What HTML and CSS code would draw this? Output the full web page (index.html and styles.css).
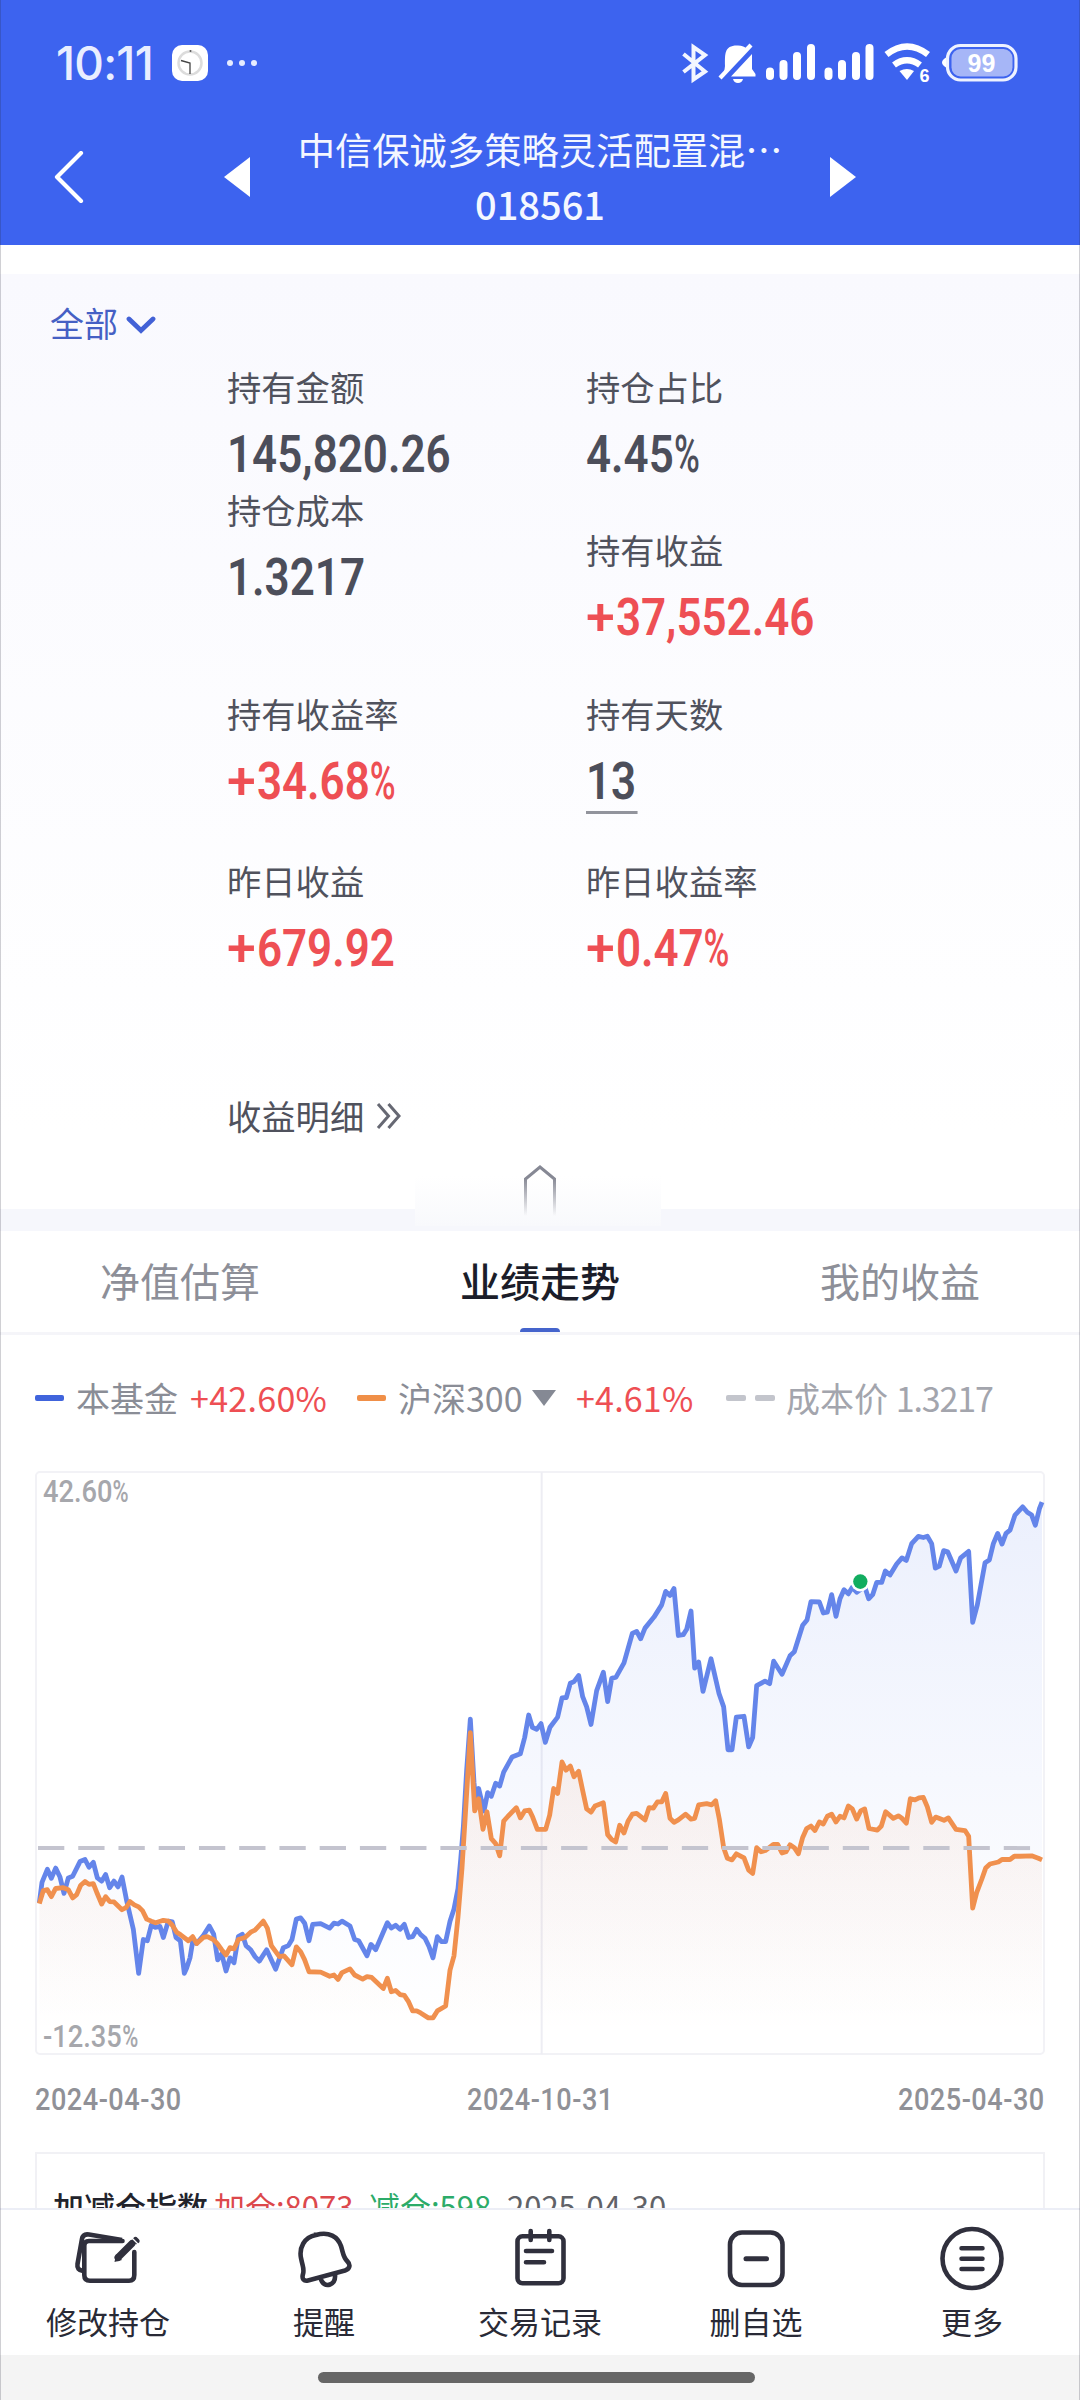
FILE: index.html
```
<!DOCTYPE html>
<html lang="zh-CN">
<head>
<meta charset="utf-8">
<title>基金详情</title>
<link rel="stylesheet" href="styles.css">
</head>
<body>
<div class="page">
  <header class="header">
    <div class="status">
      <span class="clock">10:11</span>
      <svg class="app-icon" viewBox="0 0 36 36"><rect width="36" height="36" rx="10" fill="#fff"/><circle cx="18" cy="18" r="11.5" fill="none" stroke="#dcdcdc" stroke-width="2.5"/><path d="M9 15.5l9 2.5v11" fill="none" stroke="#444" stroke-width="1.3"/><circle cx="18.5" cy="6" r="1" fill="#555"/></svg>
      <svg class="dots" viewBox="0 0 32 8"><g fill="#e6ecff"><circle cx="4" cy="4" r="3"/><circle cx="16" cy="4" r="3"/><circle cx="28" cy="4" r="3"/></g></svg>
      <svg class="indicators" viewBox="680 42 340 42">
        <path d="M683.500 54L705 71.500L693.500 79.500V47L705 55L683.500 72" fill="none" stroke="#f3f6ff" stroke-width="4"/>
        <path d="M725 66c0-12-1-21 13-20.500c4 .1 7 1.500 9 3.500L724 73zM731 76.500L752 54v15l3.500 5v2.500zM733 79h10q-1 4-5 4t-5-4z" fill="#fff"/>
        <path d="M720 78L751 45" stroke="#fff" stroke-width="4.200"/>
        <g stroke="#fff" stroke-width="8" stroke-linecap="round"><path d="M770 71.500V76M783.500 64V76M797 56V76M811 48V76M828.500 71.500V76M842 64V76M856 56V76M869.500 48V76"/></g>
        <g fill="none" stroke="#fff" stroke-width="6.500"><path d="M886.500 54.500Q907 38.500 928 54.500"/><path d="M894 65Q907 55.500 920 65"/></g>
        <path d="M899.500 71Q907 67 914 71L907 80z" fill="#fff"/>
        <text x="924.500" y="81.500" class="wifi-gen">6</text>
        <rect x="947.500" y="45.500" width="68.500" height="34.500" rx="13" fill="none" stroke="#eef2ff" stroke-width="3.200"/>
        <path d="M946 57.500Q942 60 942 62.500T946 67.500z" fill="#fff"/>
        <rect x="951.500" y="49" width="61" height="27.500" rx="9" fill="#a6b6f7"/>
        <text x="981.500" y="71.500" class="battery-level">99</text>
      </svg>
    </div>
    <nav class="nav">
      <svg class="back" viewBox="0 0 30 52"><path d="M27 2L3 26L27 50" fill="none" stroke="#fff" stroke-width="4.200" stroke-linecap="round" stroke-linejoin="round"/></svg>
      <svg class="tri" viewBox="0 0 26 40"><path d="M26 0V40L0 20z" fill="#fff"/></svg>
      <div class="fund"><div class="fund-name">中信保诚多策略灵活配置混<span class="ell">⋯</span></div><div class="fund-code">018561</div></div>
      <svg class="tri" viewBox="0 0 26 40"><path d="M0 0V40L26 20z" fill="#fff"/></svg>
    </nav>
  </header>

  <section class="holding">
    <div class="filter"><span>全部</span><svg viewBox="0 0 30 20"><path d="M3 4L15 15.500L27 4" fill="none" stroke="#4261d6" stroke-width="4.800" stroke-linecap="round"/></svg></div>
    <div class="metrics">
      <div class="cell stack">
        <div class="metric"><div class="label">持有金额</div><div class="value">145,820.26</div></div>
        <div class="metric"><div class="label">持仓成本</div><div class="value">1.3217</div></div>
      </div>
      <div class="cell spread">
        <div class="metric"><div class="label">持仓占比</div><div class="value">4.45<i>%</i></div></div>
        <div class="metric"><div class="label">持有收益</div><div class="value up"><b class="sign">+</b>37,552.46</div></div>
      </div>
      <div class="metric"><div class="label">持有收益率</div><div class="value up"><b class="sign">+</b>34.68<i>%</i></div></div>
      <div class="metric"><div class="label">持有天数</div><div class="value days">13</div></div>
      <div class="metric"><div class="label">昨日收益</div><div class="value up"><b class="sign">+</b>679.92</div></div>
      <div class="metric"><div class="label">昨日收益率</div><div class="value up"><b class="sign">+</b>0.47<i>%</i></div></div>
    </div>
    <div class="detail"><span class="label">收益明细</span><svg viewBox="0 0 26 28"><path d="M2 2L12.500 14L2 26M12.500 2L23 14L12.500 26" fill="none" stroke="#666873" stroke-width="3"/></svg></div>
    <div class="collapse">
      <svg viewBox="0 0 36 54"><defs><linearGradient id="fade" gradientUnits="userSpaceOnUse" x1="0" y1="14" x2="0" y2="52"><stop offset="0" stop-color="#868894"/><stop offset="1" stop-color="#868894" stop-opacity="0"/></linearGradient></defs><path d="M3.500 52V15L18 3L32.500 15V52" fill="none" stroke="url(#fade)" stroke-width="3"/></svg>
    </div>
  </section>

  <div class="tabs"><div class="tab">净值估算</div><div class="tab active">业绩走势</div><div class="tab">我的收益</div></div>

  <section class="trend">
    <div class="legend">
      <b class="dash blue"></b><span class="l1">本基金</span><span class="up l2">+42.60%</span>
      <b class="dash orange"></b><span class="l3">沪深300</span><svg class="drop" viewBox="0 0 24 16"><path d="M0 0H24L12 16z" fill="#858994"/></svg><span class="up l4">+4.61%</span>
      <b class="dash gray"></b><b class="dash gray"></b><span class="cost">成本价 <span class="price">1.3217</span></span>
    </div>
    <div class="chart">
      <svg class="plot" viewBox="105 27 3030 1431" preserveAspectRatio="none">
        <defs>
          <linearGradient id="gb" gradientUnits="userSpaceOnUse" x1="0" y1="100" x2="0" y2="1380"><stop offset="0" stop-color="#5b7fec" stop-opacity=".12"/><stop offset=".65" stop-color="#5b7fec" stop-opacity=".04"/><stop offset="1" stop-color="#5b7fec" stop-opacity="0"/></linearGradient>
          <linearGradient id="go" gradientUnits="userSpaceOnUse" x1="0" y1="700" x2="0" y2="1400"><stop offset="0" stop-color="#f0884a" stop-opacity=".10"/><stop offset="1" stop-color="#f0884a" stop-opacity="0"/></linearGradient>
        </defs>
        <path class="grid" d="M1625 30V1456"/>
        <path id="blueArea" fill="url(#gb)"/>
        <path id="orangeArea" fill="url(#go)"/>
        <polyline id="blueLine" class="line fund-line"/>
        <polyline id="orangeLine" class="line index-line"/>
        <path class="cost-line" d="M114 951H3096"/>
        <ellipse cx="2581" cy="298" rx="29" ry="24" fill="#fff"/>
        <ellipse cx="2581" cy="298" rx="21.500" ry="18" fill="#12ad60"/>
      </svg>
      <span class="axis top">42.60<i>%</i></span>
      <span class="axis bottom">-12.35<i>%</i></span>
    </div>
    <div class="dates"><span>2024-04-30</span><span>2024-10-31</span><span>2025-04-30</span></div>
    <div class="index-card"><span class="name">加减仓指数</span><span class="add">加仓:8073</span><span class="cut">减仓:598</span><span class="day">2025-04-30</span></div>
  </section>

  <footer class="toolbar">
    <div class="tool"><svg viewBox="74 2228 68 60"><path d="M122.500 2241H89Q84.300 2241 84.300 2246V2275Q84.300 2280.700 90 2280.700H129Q134.300 2280.700 134.300 2275V2252" stroke-linecap="round"/><path d="M122 2240L89 2234.500Q83 2233.500 82 2239L77.500 2264Q76.500 2270 83 2271"/><path d="M118 2257.500L132 2243.500" stroke-width="7" stroke-linecap="round"/><path d="M114.500 2262L116 2254L122 2260z" fill="#30303d" stroke="none"/><path d="M135.500 2240L136.500 2241" stroke-width="6" stroke-linecap="round"/><path d="M131 2237L139.500 2245.500" stroke="#fff" stroke-width="1.200"/></svg><span>修改持仓</span></div>
    <div class="tool"><svg viewBox="290 2228 68 60"><path d="M316 2235C304 2237 299 2248 301 2258C303 2268 304.500 2269 303 2274C301.500 2279 304 2281.500 308 2280.500L345 2270.500C349.500 2269 351 2265 347.500 2261.500C343 2257 343.500 2254 341 2246C338 2237 329 2231 316 2235zM316 2235V2232.500M320.500 2278C322 2284 326 2286 330 2284.500S335.500 2279 335 2274"/></svg><span>提醒</span></div>
    <div class="tool"><svg viewBox="506 2228 68 60"><rect x="517.500" y="2236.300" width="46" height="47" rx="5"/><path d="M530.700 2231V2240M549.300 2231V2240M526 2251H552M526 2262.300H544" stroke-linecap="round"/></svg><span>交易记录</span></div>
    <div class="tool"><svg viewBox="722 2228 68 60"><rect x="730" y="2232.500" width="52.500" height="52.500" rx="12"/><path d="M746 2258.700H766.500" stroke-width="5" stroke-linecap="round"/></svg><span>删自选</span></div>
    <div class="tool"><svg viewBox="938 2228 68 60"><circle cx="972" cy="2258.500" r="29.500"/><path d="M961.500 2248.300H982.500M961.500 2258.700H982.500M961.500 2269H982.500" stroke-width="4.500" stroke-linecap="round"/></svg><span>更多</span></div>
  </footer>
  <div class="home"><div class="pill"></div></div>
</div>
<script src="chart.js"></script>
</body>
</html>
```
FILE: chart.js
```
// Series are plotted in the viewBox units of the .plot svg.
var fund = "118,1085 126,1035 142,1003 154,1025 167,1000 180,1022 192,1062 205,1024 218,1020 240,984 255,979 267,998 280,986 292,1024 305,1032 317,1016 329,1048 342,1032 354,1046 366,1022 380,1080 400,1150 416,1258 430,1175 442,1178 454,1140 466,1145 480,1143 490,1170 505,1130 517,1132 528,1170 541,1178 553,1258 560,1245 570,1220 578,1180 590,1185 610,1165 628,1142 641,1162 653,1225 665,1210 678,1252 690,1220 702,1232 715,1168 727,1162 738,1190 752,1200 765,1217 778,1228 800,1200 827,1248 850,1195 865,1190 876,1175 889,1125 902,1122 914,1135 927,1178 938,1138 962,1136 989,1147 1002,1135 1014,1137 1026,1130 1050,1142 1064,1175 1076,1178 1101,1215 1113,1187 1127,1200 1162,1134 1174,1147 1187,1140 1200,1150 1213,1138 1226,1170 1238,1168 1250,1150 1262,1163 1275,1172 1287,1192 1299,1220 1312,1168 1324,1180 1337,1180 1350,1130 1362,1100 1374,1050 1382,980 1390,900 1400,760 1411,635 1422,790 1428,850 1436,805 1452,860 1463,815 1474,824 1487,792 1499,799 1511,765 1536,728 1561,720 1574,680 1586,625 1597,655 1610,660 1623,646 1636,692 1650,655 1673,630 1686,583 1699,582 1711,547 1722,543 1736,528 1748,580 1760,605 1773,648 1790,565 1810,520 1823,592 1835,535 1848,532 1872,497 1897,425 1910,420 1922,438 1935,412 1962,385 1985,355 1997,322 2010,332 2022,315 2035,430 2050,428 2060,415 2073,370 2084,510 2096,495 2109,567 2133,487 2157,572 2171,605 2184,710 2196,710 2209,630 2232,628 2246,703 2258,680 2270,553 2295,542 2309,548 2321,493 2346,525 2370,480 2383,470 2408,405 2421,392 2433,347 2458,348 2470,375 2482,373 2495,330 2508,383 2520,340 2532,318 2545,328 2557,312 2570,324 2594,310 2606,340 2618,330 2630,300 2645,300 2656,272 2670,282 2690,255 2706,240 2719,246 2735,205 2755,187 2770,190 2782,187 2795,205 2806,265 2818,260 2831,222 2843,225 2868,272 2882,240 2906,224 2918,398 2932,355 2955,252 2968,245 2980,205 2993,180 3006,206 3018,180 3030,172 3045,135 3068,115 3082,128 3095,135 3106,160 3118,120 3126,103";
var index = "118,1087 130,1055 142,1053 154,1070 167,1050 190,1048 205,1053 218,1073 230,1065 242,1042 255,1033 267,1040 280,1038 292,1063 305,1088 317,1070 329,1082 342,1083 366,1102 378,1097 390,1082 403,1090 416,1095 428,1105 440,1125 454,1130 467,1134 490,1128 505,1130 517,1140 530,1157 541,1163 565,1178 578,1168 590,1185 610,1170 622,1168 640,1175 652,1185 665,1200 678,1213 690,1195 702,1198 715,1175 735,1170 752,1157 765,1152 790,1130 802,1147 814,1190 838,1217 852,1215 876,1237 889,1193 902,1205 914,1225 927,1254 962,1255 989,1265 1002,1262 1014,1273 1026,1256 1050,1247 1064,1262 1088,1272 1101,1266 1115,1268 1150,1295 1162,1270 1174,1303 1187,1300 1200,1310 1213,1312 1226,1328 1238,1350 1250,1350 1262,1355 1285,1367 1299,1367 1312,1350 1337,1338 1350,1250 1362,1215 1374,1120 1386,1000 1396,870 1411,668 1424,860 1436,830 1449,905 1461,862 1474,928 1487,940 1499,970 1511,885 1524,873 1549,852 1561,877 1574,860 1588,858 1598,875 1612,905 1637,905 1649,870 1661,805 1673,817 1686,740 1698,760 1711,750 1722,776 1736,763 1748,810 1760,855 1773,863 1785,848 1810,840 1823,918 1835,930 1847,936 1859,895 1872,914 1884,885 1897,868 1910,866 1935,882 1947,852 1960,853 1972,838 1985,838 1997,817 2010,878 2022,888 2035,882 2057,868 2073,880 2084,878 2096,845 2120,842 2135,845 2147,835 2158,880 2171,950 2182,976 2196,980 2209,965 2232,975 2246,1005 2258,1013 2270,950 2283,960 2296,957 2320,942 2333,942 2346,963 2358,960 2370,943 2383,950 2395,965 2408,925 2420,903 2433,897 2445,908 2458,887 2470,892 2482,873 2495,868 2508,887 2520,873 2532,877 2545,848 2557,855 2570,880 2582,860 2594,855 2607,903 2632,907 2644,897 2657,862 2680,878 2695,872 2706,878 2719,890 2731,830 2745,833 2757,828 2770,827 2782,850 2795,888 2807,875 2832,883 2845,877 2868,905 2895,908 2906,922 2918,1098 2930,1060 2945,1028 2957,1000 2970,990 2995,985 3006,979 3030,979 3043,971 3060,971 3095,970 3115,976 3126,980";

function draw(name, points) {
  document.getElementById(name + "Line").setAttribute("points", points);
  document.getElementById(name + "Area").setAttribute("d", "M118,1400L" + points + "L3126,1400Z");
}
draw("blue", fund);
draw("orange", index);
```
FILE: styles.css
```
* { box-sizing: border-box; }
body { margin: 0; background: #fff; font-family: "Noto Sans CJK SC", "Noto Sans", sans-serif; }
svg { display: block; flex: none; }
.page { position: relative; width: 1080px; height: 2400px; overflow: hidden; display: flex; flex-direction: column; background: #fff; }
.page::after { content: ""; position: absolute; inset: 0; border: solid rgba(40, 40, 60, .22); border-width: 0 1px; pointer-events: none; }

.header { height: 245px; background: #3d63ef; color: #f4f7ff; flex: none; }
.status { height: 107px; padding: 38px 60px 0 56px; display: flex; align-items: flex-start; }
.clock { width: 116px; font: 500 46px/51px Inter, sans-serif; letter-spacing: -.8px; color: #e9eeff; }
.app-icon { width: 36px; height: 36px; margin-top: 7px; }
.dots { width: 32px; height: 8px; margin: 21px 0 0 18px; }
.indicators { width: 340px; height: 42px; margin: 4px 0 0 auto; overflow: visible; }
.wifi-gen { font: 700 18px "Liberation Sans", sans-serif; fill: #fff; text-anchor: middle; }
.battery-level { font: 700 25px "Liberation Sans", sans-serif; fill: #fff; text-anchor: middle; }
.nav { height: 138px; padding-left: 54px; display: flex; align-items: flex-start; }
.back { width: 30px; height: 52px; margin: 44px 140px 0 0; }
.tri { width: 26px; height: 40px; margin-top: 50px; }
.fund { width: 580px; text-align: center; padding-top: 16px; }
.fund-name { font-size: 37.300px; line-height: 52px; white-space: nowrap; }
.ell { display: inline-block; width: 37px; }
.fund-code { font-size: 38px; line-height: 57px; font-weight: 500; }

.holding { height: 957px; margin-top: 29px; flex: none; background: linear-gradient(#f9f9fe, #fff 860px, #fff); display: flex; flex-direction: column; }
.filter { height: 93px; padding: 24px 0 0 50px; display: flex; align-items: flex-start; font-size: 34px; line-height: 50px; color: #4560c4; }
.filter svg { width: 30px; height: 20px; margin: 17px 0 0 8px; }
.metrics { margin-left: 227px; display: grid; grid-template-columns: 359px 400px; grid-template-rows: 327px 167px 168px; flex: none; }
.stack { display: flex; flex-direction: column; gap: 7px; }
.spread { display: flex; flex-direction: column; gap: 47px; }
.metric { height: 116px; }
.metric .label { margin-top: -1px; }
.label { font-size: 34.300px; line-height: 40px; color: #50525d; }
.value { margin-top: 18px; width: max-content; font: 600 52px/62px Roboto, sans-serif; color: #4c4e5a; transform: scaleX(.845); transform-origin: left; white-space: nowrap; }
.value i, .axis i { display: inline-block; width: .57em; font-style: normal; font-weight: 500; transform: scaleX(.8); transform-origin: left; }
.sign { display: inline-block; width: .68em; font-weight: 500; transform: scaleX(1.180); transform-origin: left; }
.value.up, .legend .up { color: #ee4f54; }
.days { position: relative; }
.days::after { content: ""; position: absolute; left: 0; bottom: -1px; width: 61px; height: 3px; background: #92949c; }
.detail { margin: 66px 0 0 227px; height: 50px; display: flex; align-items: flex-start; }
.detail svg { width: 26px; height: 28px; margin: 7px 0 0 12px; }
.collapse { height: 67px; flex: none; margin-top: auto; position: relative; background: linear-gradient(transparent 45px, #f6f7fc 45px); display: flex; justify-content: center; }
.collapse::before { content: ""; position: absolute; left: 415px; top: 12px; width: 246px; height: 50px; background: linear-gradient(#fff, #f8f9fc); }
.collapse svg { position: relative; width: 36px; height: 54px; }

.tabs { height: 104px; flex: none; display: grid; grid-template-columns: repeat(3, 1fr); border-bottom: 3px solid #f5f5f9; text-align: center; font-size: 40px; line-height: 99px; color: #8d8f98; }
.active { color: #1b1d29; font-weight: 500; position: relative; }
.active::after { content: ""; position: absolute; left: 160px; bottom: 0; width: 40px; height: 4px; border-radius: 4px 4px 0 0; background: #4564cc; }

.trend { height: 873px; flex: none; overflow: hidden; padding: 0 35px; }
.legend { height: 136px; padding-bottom: 11px; display: flex; align-items: center; font-size: 34px; color: #8a8d96; white-space: nowrap; line-height: 50px; }
.dash { width: 29px; height: 6px; border-radius: 2px; flex: none; }
.blue { background: #4064dc; }
.orange { background: #f08f48; }
.gray { width: 20px; background: #c3c5cc; }
.gray + .gray { margin-left: 9px; }
.l1 { width: 114px; margin-left: 12px; }
.l2 { width: 167px; letter-spacing: .3px; }
.l3 { width: 134px; margin-left: 12px; }
.drop { width: 24px; height: 16px; }
.l4 { width: 150px; margin-left: 20px; letter-spacing: .2px; }
.cost { margin-left: 11px; color: #a3a5ad; }
.price { letter-spacing: -1.100px; }
.chart { position: relative; height: 584px; border: 2px solid #f2f2f6; border-radius: 5px; }
.plot { position: absolute; left: -2px; top: -2px; width: 1010px; height: 584px; }
.plot path, .plot polyline { vector-effect: non-scaling-stroke; }
.grid { stroke: #ededf3; stroke-width: 2; }
.line { fill: none; stroke-width: 4.800; stroke-linejoin: round; }
.fund-line { stroke: #6485ea; }
.index-line { stroke: #f0904e; }
.cost-line { stroke: #c4c4cf; stroke-width: 4; stroke-dasharray: 26.300 13.940; }
.axis { position: absolute; left: 6px; font: 500 31px/36px Roboto, sans-serif; color: #a6a7ac; transform: scaleX(.88); transform-origin: left; white-space: nowrap; }
.top { top: 1px; }
.bottom { bottom: -2px; }
.dates { margin-top: 26px; height: 71px; display: flex; justify-content: space-between; font: 500 31.500px/37px Roboto, sans-serif; color: #909197; }
.dates span { width: 147px; letter-spacing: .600px; transform: scaleX(.86); transform-origin: left; white-space: nowrap; }
.index-card { height: 100px; border: 2px solid #f1f1f5; padding: 29px 0 0 16px; display: flex; font-size: 31px; line-height: 46px; white-space: nowrap; }
.name { width: 161px; font-weight: 500; color: #22232c; }
.add { width: 155px; color: #dc484c; }
.cut { width: 138px; color: #2cab69; }
.day { color: #606268; }

.toolbar { height: 147px; flex: none; border-top: 2px solid #eceef6; background: #fff; display: grid; grid-template-columns: repeat(5, 1fr); }
.tool { display: flex; flex-direction: column; align-items: center; padding-top: 18px; font-size: 31px; line-height: 44px; color: #292a36; }
.tool svg { width: 68px; height: 60px; overflow: visible; fill: none; stroke: #30303d; stroke-width: 4.600; stroke-linejoin: round; }
.tool span { margin-top: 11px; }
.home { height: 45px; background: #f4f4f4; display: flex; justify-content: center; flex: none; padding: 17px 7px 0 0; }
.pill { width: 437px; height: 11px; border-radius: 6px; background: #666; }
```
